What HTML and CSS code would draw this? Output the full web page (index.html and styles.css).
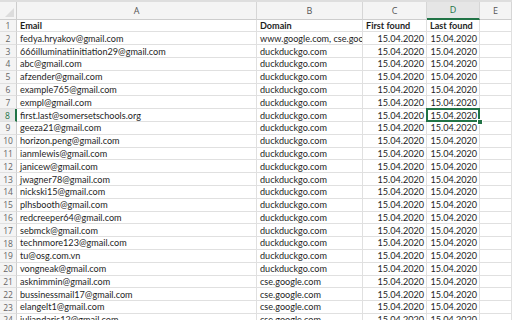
FILE: index.html
```html
<!DOCTYPE html>
<html>
<head>
<meta charset="utf-8">
<link rel="stylesheet" href="styles.css">
</head>
<body>
<div class="sheet">
  <div class="topband"></div>
  <div class="row head">
    <div class="corner"><span class="tri"></span></div>
    <div class="col">A</div><div class="col">B</div><div class="col">C</div><div class="col sel">D</div><div class="col">E</div>
  </div>
  <div class="row"><div class="num">1</div><div class="c b">Email</div><div class="c b">Domain</div><div class="c b">First found</div><div class="c b">Last found</div><div class="c"></div></div>
  <div class="row"><div class="num">2</div><div class="c">fedya.hryakov@gmail.com</div><div class="c">www.google.com, cse.google.com</div><div class="c r">15.04.2020</div><div class="c r">15.04.2020</div><div class="c"></div></div>
  <div class="row"><div class="num">3</div><div class="c">666illuminatiinitiation29@gmail.com</div><div class="c">duckduckgo.com</div><div class="c r">15.04.2020</div><div class="c r">15.04.2020</div><div class="c"></div></div>
  <div class="row"><div class="num">4</div><div class="c">abc@gmail.com</div><div class="c">duckduckgo.com</div><div class="c r">15.04.2020</div><div class="c r">15.04.2020</div><div class="c"></div></div>
  <div class="row"><div class="num">5</div><div class="c">afzender@gmail.com</div><div class="c">duckduckgo.com</div><div class="c r">15.04.2020</div><div class="c r">15.04.2020</div><div class="c"></div></div>
  <div class="row"><div class="num">6</div><div class="c">example765@gmail.com</div><div class="c">duckduckgo.com</div><div class="c r">15.04.2020</div><div class="c r">15.04.2020</div><div class="c"></div></div>
  <div class="row"><div class="num">7</div><div class="c">exmpl@gmail.com</div><div class="c">duckduckgo.com</div><div class="c r">15.04.2020</div><div class="c r">15.04.2020</div><div class="c"></div></div>
  <div class="row"><div class="num selnum">8</div><div class="c">first.last@somersetschools.org</div><div class="c">duckduckgo.com</div><div class="c r">15.04.2020</div><div class="c r active">15.04.2020</div><div class="c"></div></div>
  <div class="row"><div class="num">9</div><div class="c">geeza21@gmail.com</div><div class="c">duckduckgo.com</div><div class="c r">15.04.2020</div><div class="c r">15.04.2020</div><div class="c"></div></div>
  <div class="row"><div class="num">10</div><div class="c">horizon.peng@gmail.com</div><div class="c">duckduckgo.com</div><div class="c r">15.04.2020</div><div class="c r">15.04.2020</div><div class="c"></div></div>
  <div class="row"><div class="num">11</div><div class="c">ianmlewis@gmail.com</div><div class="c">duckduckgo.com</div><div class="c r">15.04.2020</div><div class="c r">15.04.2020</div><div class="c"></div></div>
  <div class="row"><div class="num">12</div><div class="c">janicew@gmail.com</div><div class="c">duckduckgo.com</div><div class="c r">15.04.2020</div><div class="c r">15.04.2020</div><div class="c"></div></div>
  <div class="row"><div class="num">13</div><div class="c">jwagner78@gmail.com</div><div class="c">duckduckgo.com</div><div class="c r">15.04.2020</div><div class="c r">15.04.2020</div><div class="c"></div></div>
  <div class="row"><div class="num">14</div><div class="c">nickski15@gmail.com</div><div class="c">duckduckgo.com</div><div class="c r">15.04.2020</div><div class="c r">15.04.2020</div><div class="c"></div></div>
  <div class="row"><div class="num">15</div><div class="c">plhsbooth@gmail.com</div><div class="c">duckduckgo.com</div><div class="c r">15.04.2020</div><div class="c r">15.04.2020</div><div class="c"></div></div>
  <div class="row"><div class="num">16</div><div class="c">redcreeper64@gmail.com</div><div class="c">duckduckgo.com</div><div class="c r">15.04.2020</div><div class="c r">15.04.2020</div><div class="c"></div></div>
  <div class="row"><div class="num">17</div><div class="c">sebmck@gmail.com</div><div class="c">duckduckgo.com</div><div class="c r">15.04.2020</div><div class="c r">15.04.2020</div><div class="c"></div></div>
  <div class="row"><div class="num">18</div><div class="c">technmore123@gmail.com</div><div class="c">duckduckgo.com</div><div class="c r">15.04.2020</div><div class="c r">15.04.2020</div><div class="c"></div></div>
  <div class="row"><div class="num">19</div><div class="c">tu@osg.com.vn</div><div class="c">duckduckgo.com</div><div class="c r">15.04.2020</div><div class="c r">15.04.2020</div><div class="c"></div></div>
  <div class="row"><div class="num">20</div><div class="c">vongneak@gmail.com</div><div class="c">duckduckgo.com</div><div class="c r">15.04.2020</div><div class="c r">15.04.2020</div><div class="c"></div></div>
  <div class="row"><div class="num">21</div><div class="c">asknimmin@gmail.com</div><div class="c">cse.google.com</div><div class="c r">15.04.2020</div><div class="c r">15.04.2020</div><div class="c"></div></div>
  <div class="row"><div class="num">22</div><div class="c">bussinessmail17@gmail.com</div><div class="c">cse.google.com</div><div class="c r">15.04.2020</div><div class="c r">15.04.2020</div><div class="c"></div></div>
  <div class="row"><div class="num">23</div><div class="c">elangelt1@gmail.com</div><div class="c">cse.google.com</div><div class="c r">15.04.2020</div><div class="c r">15.04.2020</div><div class="c"></div></div>
  <div class="row"><div class="num">24</div><div class="c">juliandaris12@gmail.com</div><div class="c">cse.google.com</div><div class="c r">15.04.2020</div><div class="c r">15.04.2020</div><div class="c"></div></div>
</div>
</body>
</html>
```
FILE: styles.css
```css
html, body {
  margin: 0;
  padding: 0;
  background: #ffffff;
}
.sheet {
  width: 512px;
  height: 320px;
  overflow: hidden;
  font-family: "Lato", "Liberation Sans", sans-serif;
  font-size: 9.1px;
  color: #1e1e1e;
}
.topband {
  height: 2px;
  background: #dedede;
}
.row {
  display: grid;
  grid-template-columns: 17px 240px 106px 64px 53px 1fr;
  height: 12.8px;
}
.row.head {
  height: 17.6px;
  background: #f4f4f4;
}
.corner {
  position: relative;
  border-right: 1px solid #cdcdcd;
  border-bottom: 1px solid #cdcdcd;
  box-sizing: border-box;
}
.tri {
  position: absolute;
  right: 2px;
  bottom: 2px;
  width: 0;
  height: 0;
  border-left: 9px solid transparent;
  border-bottom: 9px solid #dcdcdc;
}
.col {
  box-sizing: border-box;
  border-right: 1px solid #d6d6d6;
  border-bottom: 1px solid #cdcdcd;
  display: flex;
  align-items: center;
  justify-content: center;
  color: #555555;
  font-family: "Open Sans", sans-serif;
  font-size: 9px;
}
.col.sel {
  color: #217346;
  background: #e6e6e6;
  border-bottom: 2px solid #217346;
}
.num {
  box-sizing: border-box;
  background: #f4f4f4;
  border-right: 1px solid #cdcdcd;
  border-bottom: 1px solid #e0e0e0;
  display: flex;
  align-items: center;
  justify-content: center;
  color: #666666;
  font-family: "Open Sans", sans-serif;
  font-size: 8.5px;
}
.num.selnum {
  color: #217346;
  background: #e6e6e6;
  border-right: 2px solid #217346;
}
.c {
  box-sizing: border-box;
  border-right: 1px solid #e0e0e0;
  border-bottom: 1px solid #e0e0e0;
  padding: 0 2px 0 3px;
  white-space: nowrap;
  overflow: hidden;
  display: flex;
  align-items: center;
  line-height: 1;
}
.c.r {
  justify-content: flex-end;
}
.c.b {
  font-weight: 700;
}
.c.active {
  position: relative;
  overflow: visible;
}
.c.active::before {
  content: "";
  position: absolute;
  left: -1px;
  top: -1px;
  right: -1px;
  bottom: -1px;
  border: 2px solid #217346;
}
.c.active::after {
  content: "";
  position: absolute;
  right: -4px;
  bottom: -4px;
  width: 6px;
  height: 6px;
  background: #217346;
  border: 1px solid #ffffff;
  box-sizing: border-box;
}
```
